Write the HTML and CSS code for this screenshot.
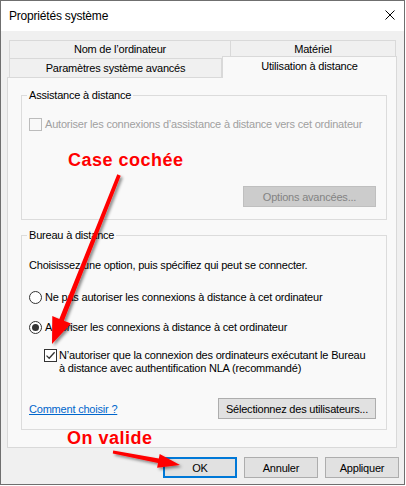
FILE: index.html
```html
<!DOCTYPE html>
<html lang="fr">
<head>
<meta charset="utf-8">
<title>Propriétés système</title>
<link rel="stylesheet" href="styles.css">
</head>
<body>
<div class="window">
  <div class="titlebar">
    <span class="title">Propriétés système</span>
    <svg class="close" width="10" height="10" viewBox="0 0 10 10" aria-label="Fermer">
      <path d="M0.5 0.5 L9.5 9.5 M9.5 0.5 L0.5 9.5" stroke="#000" stroke-width="1" fill="none"/>
    </svg>
  </div>
  <div class="body">
    <div class="tabs">
      <div class="tab-row">
        <div class="tab tab-top tab-name">Nom de l’ordinateur</div>
        <div class="tab tab-top tab-hw">Matériel</div>
      </div>
      <div class="tab-row">
        <div class="tab tab-bottom tab-adv">Paramètres système avancés</div>
        <div class="tab tab-active">Utilisation à distance</div>
      </div>
    </div>
    <div class="panel">
      <fieldset class="group group-assist">
        <legend>Assistance à distance</legend>
        <label class="check disabled"><span class="box"></span>Autoriser les connexions d’assistance à distance vers cet ordinateur</label>
        <div class="actions"><button class="btn btn-options" disabled>Options avancées...</button></div>
      </fieldset>
      <fieldset class="group group-desktop">
        <legend>Bureau à distance</legend>
        <p class="intro">Choisissez une option, puis spécifiez qui peut se connecter.</p>
        <label class="radio radio-first"><span class="dot"></span>Ne pas autoriser les connexions à distance à cet ordinateur</label>
        <label class="radio radio-second checked"><span class="dot"></span>Autoriser les connexions à distance à cet ordinateur</label>
        <label class="check nla"><span class="box"><svg width="11" height="11" viewBox="0 0 11 11"><path d="M1.5 5.6 L4.2 8.3 L9.6 2.2" stroke="#333" stroke-width="1.3" fill="none"/></svg></span><span class="nla-text">N’autoriser que la connexion des ordinateurs exécutant le Bureau à distance avec authentification NLA (recommandé)</span></label>
        <div class="bottom-row">
          <a class="link" href="#">Comment choisir ?</a>
          <button class="btn btn-users">Sélectionnez des utilisateurs...</button>
        </div>
      </fieldset>
    </div>
    <div class="dialog-buttons">
      <button class="btn btn-dialog btn-default">OK</button>
      <button class="btn btn-dialog">Annuler</button>
      <button class="btn btn-dialog">Appliquer</button>
    </div>
  </div>
  <svg class="annot" width="406" height="486" viewBox="0 0 406 486">
    <defs>
      <filter id="shadow" x="-30%" y="-30%" width="160%" height="160%">
        <feDropShadow dx="2" dy="2" stdDeviation="1.6" flood-color="#000" flood-opacity="0.45"/>
      </filter>
    </defs>
    <g fill="#ff0000" filter="url(#shadow)">
      <polygon points="117.3,174.3 59.3,318.9 52.3,316.1 52,344 70.9,323.5 63.9,320.7 120.7,175.7"/>
      <polygon points="113.2,450.6 158.8,458.6 159.7,453.9 180,465 157.1,467.7 158,463 112.8,453.4"/>
    </g>
  </svg>
  <div class="note note-check">Case cochée</div>
  <div class="note note-ok">On valide</div>
</div>
</body>
</html>
```
FILE: styles.css
```css
* {
  box-sizing: border-box;
}

html, body {
  margin: 0;
  background: #ffffff;
}

body {
  font-family: "Liberation Sans", Arial, sans-serif;
  font-size: 11px;
  color: #000;
}

.window {
  position: relative;
  width: 405px;
  height: 485px;
  border: 1px solid #6f6f6f;
  background: #f0f0f0;
  display: flex;
  flex-direction: column;
}

.titlebar {
  flex: none;
  height: 30px;
  background: #ffffff;
  display: flex;
  justify-content: space-between;
  align-items: flex-start;
  padding: 0 9px 0 8px;
}

.title {
  font-size: 12px;
  line-height: 30px;
  letter-spacing: -0.2px;
}

.close {
  margin-top: 9px;
  display: block;
}

.body {
  flex: 1;
  padding: 9px 7px 0 6px;
  display: flex;
  flex-direction: column;
}

.tabs {
  margin-left: 2px;
}

.tab-row {
  display: flex;
}

.tab {
  border: 1px solid #d9d9d9;
  border-bottom: none;
  background: #f0f0f0;
  text-align: center;
  letter-spacing: -0.2px;
  white-space: nowrap;
}

.tab-top {
  height: 18px;
  line-height: 17px;
}

.tab-name {
  width: 222px;
}

.tab-hw {
  width: 165px;
  border-left: none;
}

.tab-bottom {
  height: 19px;
  line-height: 18px;
}

.tab-adv {
  width: 213px;
}

.tab-active {
  position: relative;
  z-index: 1;
  width: 175px;
  height: 22px;
  margin-top: -2px;
  margin-bottom: -1px;
  line-height: 18px;
  background: #f9f9f9;
}

.panel {
  height: 371px;
  border: 1px solid #d9d9d9;
  background: #f9f9f9;
  padding: 10px 9px 17px 13px;
}

.group {
  margin: 0;
  min-width: 0;
  border: 1px solid #dcdcdc;
  padding: 0 10px 12px 7px;
}

.group-desktop {
  margin-top: 8px;
  padding-bottom: 10px;
}

.group legend {
  padding: 0 2px;
  margin-left: -2px;
  line-height: 14px;
  letter-spacing: -0.2px;
}

.check,
.radio {
  display: flex;
  align-items: center;
  height: 14px;
  line-height: 14px;
  letter-spacing: -0.2px;
  white-space: nowrap;
}

.group-assist .check {
  margin-top: 15px;
}

.box {
  flex: none;
  width: 13px;
  height: 13px;
  border: 1px solid #333333;
  background: #ffffff;
  margin-right: 3px;
  display: flex;
  align-items: center;
  justify-content: center;
}

.box svg {
  display: block;
}

.disabled {
  color: #a0a0a0;
}

.disabled .box {
  border-color: #bcbcbc;
  background: transparent;
}

.actions {
  display: flex;
  justify-content: flex-end;
  margin-top: 55px;
}

.btn {
  height: 21px;
  padding: 0;
  border: 1px solid #adadad;
  background: #e1e1e1;
  font-family: "Liberation Sans", Arial, sans-serif;
  font-size: 11px;
  letter-spacing: -0.2px;
  color: #000;
  white-space: nowrap;
}

.btn-options {
  width: 133px;
  background: #cccccc;
  border-color: #bfbfbf;
  color: #838383;
}

.intro {
  margin: 16px 0 0;
  line-height: 14px;
  letter-spacing: -0.2px;
  white-space: nowrap;
}

.radio-first {
  margin-top: 18px;
}

.radio-second {
  margin-top: 16px;
}

.dot {
  flex: none;
  width: 13px;
  height: 13px;
  border: 1px solid #333333;
  border-radius: 50%;
  background: #ffffff;
  margin-right: 3px;
  display: flex;
  align-items: center;
  justify-content: center;
}

.radio.checked .dot::after {
  content: "";
  width: 7px;
  height: 7px;
  border-radius: 50%;
  background: #333333;
}

.nla {
  height: auto;
  align-items: flex-start;
  margin-top: 15px;
  margin-left: 15px;
  line-height: 13px;
  white-space: normal;
}

.nla .box {
  margin-right: 2px;
}

.nla-text {
  max-width: 311px;
}

.bottom-row {
  display: flex;
  justify-content: space-between;
  align-items: center;
  margin-top: 23px;
}

.link {
  color: #0066cc;
  text-decoration: underline;
  letter-spacing: -0.2px;
}

.btn-users {
  width: 158px;
}

.dialog-buttons {
  display: flex;
  justify-content: flex-end;
  gap: 7px;
  margin-top: 9px;
  margin-right: -2px;
}

.btn-dialog {
  width: 74px;
}

.btn-default {
  border: 2px solid #0078d7;
}

.annot {
  position: absolute;
  left: -1px;
  top: -1px;
  pointer-events: none;
}

.note {
  position: absolute;
  color: #ff0000;
  font-family: "Liberation Sans", Arial, sans-serif;
  font-weight: bold;
  font-size: 18px;
  line-height: 18px;
  letter-spacing: 0.5px;
  white-space: nowrap;
}

.note-check {
  left: 67px;
  top: 150px;
}

.note-ok {
  left: 66px;
  top: 428px;
}
```
